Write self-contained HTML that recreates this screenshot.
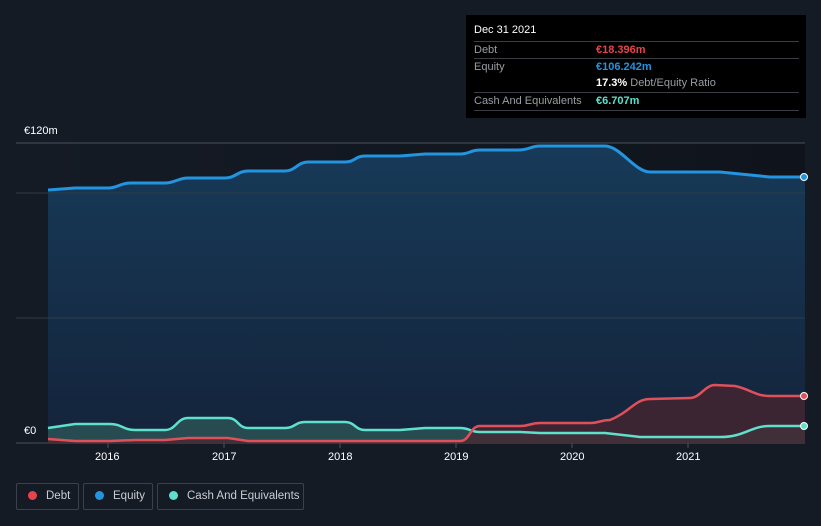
<!DOCTYPE html>
<html><head><meta charset="utf-8"><style>
body{margin:0;width:821px;height:526px;background:#151b25;font-family:"Liberation Sans",sans-serif;overflow:hidden;position:relative}
.tt{position:absolute;left:466px;top:15px;width:340px;height:103px;background:#000;color:#fff;font-size:11px}
.row{position:absolute;left:8px;width:325px;border-top:1px solid #3a3d44;height:17px;line-height:17px}
.lab{color:#9a9da3;position:absolute;left:0}
.val{position:absolute;left:122px;font-weight:bold}
.leg{position:absolute;top:483px;height:27px;border:1px solid #3b404a;border-radius:2px;color:#c9ccd1;font-size:11.5px;line-height:25px;box-sizing:border-box;white-space:nowrap}
.leg i{display:inline-block;width:9px;height:9px;border-radius:50%;margin:0 9px 0 11px;vertical-align:-1px}
.ax{position:absolute;color:#fff;font-size:11px}
</style></head><body>
<svg width="821" height="526" style="position:absolute;left:0;top:0">
<defs>
<linearGradient id="eq" x1="0" y1="0" x2="0" y2="1"><stop offset="0" stop-color="#173a58"/><stop offset="1" stop-color="#14233a"/></linearGradient>
<linearGradient id="bg" x1="0" y1="0" x2="1" y2="0"><stop offset="0" stop-color="#151b25"/><stop offset="1" stop-color="#0f141c"/></linearGradient>
</defs>
<rect x="16" y="143" width="789" height="300" fill="url(#bg)"/>
<path d="M48,190 L75,188 L108,188 C118,188 120,183 130,183 L165,183 C175,183 178,178 188,178 L225,178 C235,178 238,171 248,171 L285,171 C295,171 298,162 308,162 L345,162 C355,162 355,156 365,156 L400,156 L425,154 L460,154 C470,154 470,150 480,150 L518,150 C530,150 530,146 540,146 L605,146 C620,146 635,172 650,172 L720,172 L770,177 L805,177 L805,443 L48,443Z" fill="url(#eq)"/>
<line x1="16" y1="143" x2="805" y2="143" stroke="#4a4f58"/>
<line x1="16" y1="193" x2="805" y2="193" stroke="#2e3b4b"/>
<line x1="16" y1="318" x2="805" y2="318" stroke="#2e3b4b"/>
<line x1="16" y1="443" x2="805" y2="443" stroke="#4a4f58"/>
<path d="M48,428 L75,424 L110,424 C122,424 123,430 135,430 L165,430 C176,430 177,418 188,418 L228,418 C238,418 238,428 248,428 L285,428 C295,428 295,422 305,422 L345,422 C355,422 355,430 365,430 L400,430 L425,428 L460,428 C470,428 470,432 480,432 L520,432 L540,433 L605,433 L640,437 L720,437 C745,437 750,426 770,426 L805,426 L805,443 L48,443Z" fill="#2c5556" opacity=".8"/>
<path d="M48,439 L75,441 L110,441 L135,440 L165,440 L188,438 L228,438 L248,441 L460,441 C470,441 470,426 480,426 L520,426 C530,426 530,423 540,423 L590,423 C600,423 600,420 610,420 C630,412 635,399 650,399 L690,398 C700,398 705,385 715,385 L735,386 C750,389 755,396 770,396 L805,396 L805,443 L48,443Z" fill="#4a2530" opacity=".75"/>
<path d="M48,190 L75,188 L108,188 C118,188 120,183 130,183 L165,183 C175,183 178,178 188,178 L225,178 C235,178 238,171 248,171 L285,171 C295,171 298,162 308,162 L345,162 C355,162 355,156 365,156 L400,156 L425,154 L460,154 C470,154 470,150 480,150 L518,150 C530,150 530,146 540,146 L605,146 C620,146 635,172 650,172 L720,172 L770,177 L805,177" fill="none" stroke="#2394e0" stroke-width="3"/>
<path d="M48,428 L75,424 L110,424 C122,424 123,430 135,430 L165,430 C176,430 177,418 188,418 L228,418 C238,418 238,428 248,428 L285,428 C295,428 295,422 305,422 L345,422 C355,422 355,430 365,430 L400,430 L425,428 L460,428 C470,428 470,432 480,432 L520,432 L540,433 L605,433 L640,437 L720,437 C745,437 750,426 770,426 L805,426" fill="none" stroke="#5fe0cc" stroke-width="2.5"/>
<path d="M48,439 L75,441 L110,441 L135,440 L165,440 L188,438 L228,438 L248,441 L460,441 C470,441 470,426 480,426 L520,426 C530,426 530,423 540,423 L590,423 C600,423 600,420 610,420 C630,412 635,399 650,399 L690,398 C700,398 705,385 715,385 L735,386 C750,389 755,396 770,396 L805,396" fill="none" stroke="#e0505b" stroke-width="2.5"/>
<circle cx="804" cy="177" r="3.5" fill="#2394e0" stroke="#fff" stroke-width="1"/>
<circle cx="804" cy="396" r="3.5" fill="#e0505b" stroke="#fff" stroke-width="1"/>
<circle cx="804" cy="426" r="3.5" fill="#5fe0cc" stroke="#fff" stroke-width="1"/>
<g stroke="#4a4f58"><line x1="108" y1="443" x2="108" y2="448"/><line x1="224" y1="443" x2="224" y2="448"/><line x1="340" y1="443" x2="340" y2="448"/><line x1="456" y1="443" x2="456" y2="448"/><line x1="572" y1="443" x2="572" y2="448"/><line x1="688" y1="443" x2="688" y2="448"/></g>
</svg>
<div class="ax" style="left:24px;top:125px">€120m</div>
<div class="ax" style="left:24px;top:425px">€0</div>
<div class="ax" style="left:95px;top:451px">2016</div>
<div class="ax" style="left:212px;top:451px">2017</div>
<div class="ax" style="left:328px;top:451px">2018</div>
<div class="ax" style="left:444px;top:451px">2019</div>
<div class="ax" style="left:560px;top:451px">2020</div>
<div class="ax" style="left:676px;top:451px">2021</div>
<div class="tt">
<div style="position:absolute;left:8px;top:9px">Dec 31 2021</div>
<div class="row" style="top:26px"><span class="lab">Debt</span><span class="val" style="color:#e8434d">€18.396m</span></div>
<div class="row" style="top:43px"><span class="lab">Equity</span><span class="val" style="color:#2394e0">€106.242m</span></div>
<div class="row" style="top:60px;border-top:none"><span class="val">17.3% <span style="color:#9a9da3;font-weight:normal">Debt/Equity Ratio</span></span></div>
<div class="row" style="top:77px"><span class="lab">Cash And Equivalents</span><span class="val" style="color:#5fe0cc">€6.707m</span></div>
<div class="row" style="top:95px;height:0"></div>
</div>
<div class="leg" style="left:16px;width:63px"><i style="background:#e8434d"></i>Debt</div>
<div class="leg" style="left:83px;width:70px"><i style="background:#2394e0"></i>Equity</div>
<div class="leg" style="left:157px;width:147px"><i style="background:#5fe0cc"></i>Cash And Equivalents</div>
</body></html>
